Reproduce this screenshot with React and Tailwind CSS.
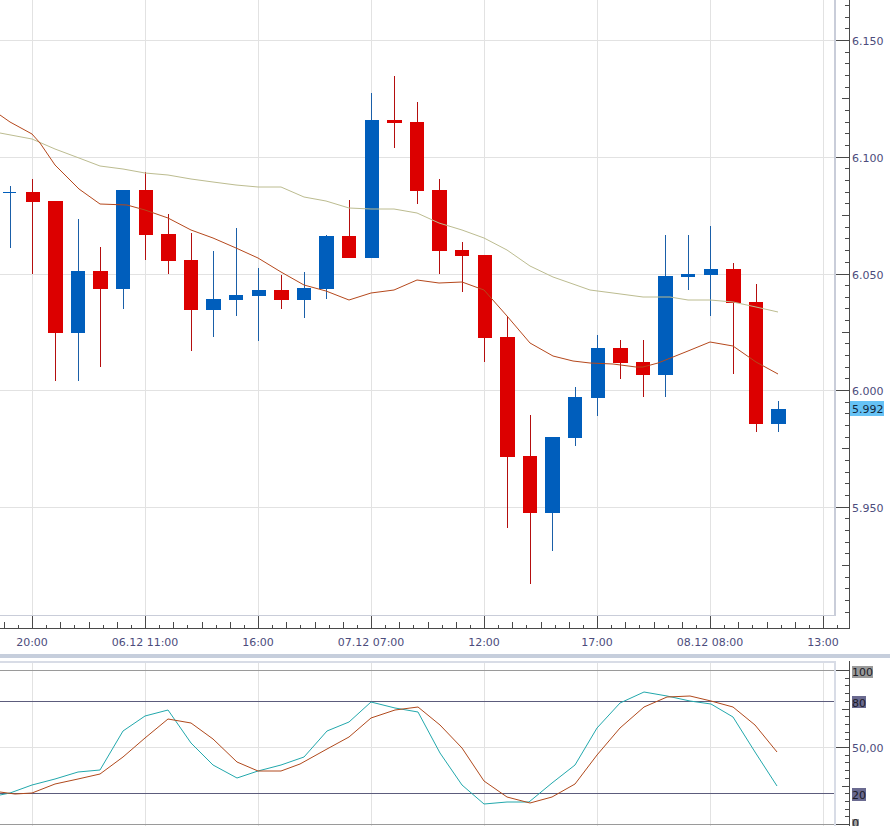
import React from "react";

const RED = "#dc0000";
const BLUE = "#005ebc";

// wick x, body left, body right, high, low, body top, body bottom, colour
const candles = [
  [10, 3, 16, 186, 248, 192, 193, BLUE],
  [32, 26, 40, 179, 274, 192, 202, RED],
  [55, 48, 63, 201, 381, 201, 333, RED],
  [78, 71, 85, 219, 381, 271, 333, BLUE],
  [100, 93, 108, 247, 367, 271, 289, RED],
  [123, 116, 130, 190, 309, 190, 289, BLUE],
  [145, 139, 153, 172, 260, 190, 235, RED],
  [168, 161, 176, 214, 274, 234, 261, RED],
  [191, 184, 198, 233, 351, 260, 310, RED],
  [213, 206, 221, 251, 337, 299, 310, BLUE],
  [236, 229, 243, 228, 316, 295, 300, BLUE],
  [258, 252, 266, 268, 341, 290, 296, BLUE],
  [281, 274, 289, 275, 309, 290, 300, RED],
  [304, 297, 311, 272, 318, 288, 300, BLUE],
  [326, 319, 334, 235, 299, 236, 289, BLUE],
  [349, 342, 356, 200, 258, 236, 258, RED],
  [371, 365, 379, 93, 258, 120, 258, BLUE],
  [394, 387, 402, 76, 148, 120, 123, RED],
  [417, 410, 424, 102, 204, 122, 191, RED],
  [439, 432, 447, 179, 274, 190, 251, RED],
  [462, 455, 469, 242, 292, 250, 256, RED],
  [484, 478, 492, 255, 362, 255, 338, RED],
  [507, 500, 515, 316, 528, 337, 457, RED],
  [530, 523, 537, 415, 584, 456, 513, RED],
  [552, 545, 560, 437, 551, 437, 513, BLUE],
  [575, 568, 582, 387, 446, 397, 438, BLUE],
  [597, 591, 605, 335, 416, 348, 398, BLUE],
  [620, 613, 628, 340, 379, 348, 363, RED],
  [643, 636, 650, 340, 397, 362, 375, RED],
  [665, 658, 673, 235, 397, 276, 375, BLUE],
  [688, 681, 695, 235, 290, 274, 277, BLUE],
  [710, 704, 718, 226, 316, 269, 275, BLUE],
  [733, 726, 741, 263, 374, 269, 303, RED],
  [756, 749, 763, 284, 432, 302, 424, RED],
  [778, 771, 786, 401, 432, 409, 424, BLUE],
];

const fastMa =
  "0,115 10,122 32,134 40,143 55,165 79,189 100,204 127,205 145,210 168,218 191,230 213,238 236,248 258,258 281,272 304,285 326,291 349,300 371,293 394,290 417,280 439,283 462,282 484,290 507,316 530,343 553,356 573,361 590,363 613,364 636,367 643,367 658,363 688,351 710,342 733,346 756,362 778,374";
const slowMa =
  "0,133 32,139 55,149 79,158 100,166 123,169 145,173 168,175 191,179 213,182 236,185 258,187 281,187 304,197 326,201 349,208 371,209 394,209 417,213 439,223 462,230 484,238 507,250 530,266 553,277 573,284 590,290 613,293 643,297 670,297 688,300 710,300 733,302 756,307 778,312";
const oscFast =
  "0,795 10,793 32,785 55,779 78,772 100,770 123,731 145,716 168,710 191,743 213,765 237,778 258,771 281,765 304,757 327,731 349,722 371,702 395,708 418,712 440,753 462,785 484,804 507,802 529,802 552,783 575,765 597,728 620,703 644,692 667,696 690,701 711,704 733,717 755,752 777,786";
const oscSlow =
  "0,792 15,794 32,793 55,784 78,779 100,774 123,757 145,738 168,719 191,723 213,739 237,762 258,771 281,771 300,764 327,749 349,737 371,718 395,710 418,707 440,725 462,748 484,781 507,797 530,803 552,797 575,784 597,755 620,728 644,707 667,697 690,696 711,701 733,707 755,725 777,752";

const timeGrid = [32, 145, 258, 371, 484, 597, 710, 823];
const priceGrid = [
  [40, "6.150"],
  [157, "6.100"],
  [274, "6.050"],
  [390, "6.000"],
  [507, "5.950"],
];
const timeLabels = [
  [32, "20:00"],
  [145, "06.12 11:00"],
  [258, "16:00"],
  [371, "07.12 07:00"],
  [484, "12:00"],
  [597, "17:00"],
  [710, "08.12 08:00"],
  [823, "13:00"],
];
// value tags on the oscillator scale: label, box top, box height, box width, baseline, fill
const oscTags = [
  ["100", 666, 12, 21, 676, "#9a9a9a"],
  ["80", 696, 12, 14, 707, "#6a6a90"],
  ["20", 788, 13, 14, 799, "#6a6a90"],
  ["0", 819, 7, 7, 827, "#a4a4a4"],
];

const GRID = "#e2e2e2";
const AXIS = "#4a4a4a";
const LABEL = "#4c4c7c";

function PricePlot() {
  return (
    <svg viewBox="0 0 834 615" className="block w-[834px] h-[615px]">
      <g shapeRendering="crispEdges">
        {timeGrid.map((x) => (
          <rect key={x} x={x} y="0" width="1" height="615" fill={GRID} />
        ))}
        {priceGrid.map(([y]) => (
          <rect key={y} x="0" y={y} width="834" height="1" fill={GRID} />
        ))}
        {candles.map(([wx, l, r, hi, lo, top, bot, color]) => (
          <g key={wx}>
            <rect x={wx} y={hi} width="1" height={lo - hi} fill={color === RED ? "#b40e0e" : "#1a5fa8"} />
            <rect x={l} y={top} width={r - l} height={bot - top} fill={color} />
          </g>
        ))}
      </g>
      <polyline points={slowMa} fill="none" stroke="#bcbc90" strokeWidth="1" />
      <polyline points={fastMa} fill="none" stroke="#b5481c" strokeWidth="1" />
    </svg>
  );
}

function PriceAxis() {
  // 11.67px between ticks, every fifth one longer, every tenth sits on a grid line
  const ticks = [];
  for (let i = -3; i < 50; i++) {
    if (i % 10 === 0) continue;
    ticks.push([Math.round(40 + i * 11.67), Math.abs(i) % 5 === 0 ? 7 : 4]);
  }
  return (
    <svg viewBox="836 0 54 616" className="block w-[54px] h-[616px]">
      <g shapeRendering="crispEdges">
        <rect x="849" y="0" width="1" height="616" fill={AXIS} />
        {ticks.map(([y, len]) => (
          <rect key={y} x={849 - len} y={y} width={len} height="1" fill={AXIS} />
        ))}
        {priceGrid.map(([y]) => (
          <rect key={y} x="836" y={y} width="13" height="1" fill={AXIS} />
        ))}
        <rect x="850" y="401" width="34" height="15" fill="#66c2f5" />
      </g>
      {priceGrid.map(([y, label]) => (
        <text key={y} x="852" y={y + 5} fill={LABEL}>
          {label}
        </text>
      ))}
      <text x="852" y="413" fill="#12283c">
        5.992
      </text>
    </svg>
  );
}

function TimeAxis() {
  const ticks = [];
  for (let i = 0; i < 60; i++) {
    const x = Math.round(32 - 14.125 * 2 + i * 14.125);
    if (x > 849) break;
    ticks.push([x, i % 2 === 0 ? 6 : 3]);
  }
  return (
    <svg viewBox="0 616 890 38" className="block w-[890px] h-[38px]">
      <g shapeRendering="crispEdges">
        <rect x="0" y="628" width="850" height="1" fill={AXIS} />
        <rect x="849" y="616" width="1" height="13" fill={AXIS} />
        {ticks.map(([x, h]) => (
          <rect key={x} x={x} y={628 - h} width="1" height={h} fill={AXIS} />
        ))}
        {timeGrid.map((x) => (
          <rect key={x} x={x} y="616" width="1" height="12" fill={AXIS} />
        ))}
      </g>
      {timeLabels.map(([x, label]) => (
        <text key={x} x={x} y="646" textAnchor="middle" fill={LABEL}>
          {label}
        </text>
      ))}
    </svg>
  );
}

function OscPlot() {
  return (
    <svg viewBox="0 663 834 163" className="block w-[834px] h-[163px]">
      <g shapeRendering="crispEdges">
        {timeGrid.map((x) => (
          <rect key={x} x={x} y="663" width="1" height="163" fill={GRID} />
        ))}
        <rect x="0" y="747" width="834" height="1" fill={GRID} />
        <rect x="0" y="670" width="834" height="1" fill="#9a9a9a" />
        <rect x="0" y="701" width="834" height="1" fill="#5c5c7c" />
        <rect x="0" y="793" width="834" height="1" fill="#5c5c7c" />
        <rect x="0" y="824" width="834" height="1" fill="#9a9a9a" />
      </g>
      <polyline points={oscFast} fill="none" stroke="#22a8ac" strokeWidth="1" />
      <polyline points={oscSlow} fill="none" stroke="#b0491c" strokeWidth="1" />
    </svg>
  );
}

function OscAxis() {
  const ticks = [];
  for (let i = 0; i <= 20; i++) {
    const len = i % 10 === 0 ? 13 : i % 5 === 0 ? 7 : 4;
    ticks.push([Math.round(670 + i * 7.7), len]);
  }
  return (
    <svg viewBox="836 661 54 165" className="block w-[54px] h-[165px]">
      <g shapeRendering="crispEdges">
        <rect x="849" y="661" width="1" height="165" fill={AXIS} />
        {ticks.map(([y, len]) => (
          <rect key={y} x={849 - len} y={y} width={len} height="1" fill={AXIS} />
        ))}
      </g>
      {oscTags.map(([label, top, h, w, base, fill]) => (
        <g key={label}>
          <rect x="852" y={top} width={w} height={h} fill={fill} shapeRendering="crispEdges" />
          <text x="852" y={base} fill="#1c1c28">
            {label}
          </text>
        </g>
      ))}
      <text x="852" y="752" fill={LABEL}>
        50,00
      </text>
    </svg>
  );
}

export default function App() {
  return (
    <div className="w-[890px] h-[826px] overflow-hidden bg-white font-['DejaVu_Sans',sans-serif] text-[11px]">
      <div className="flex h-[616px]">
        <div className="w-[836px] h-[616px] border-r-2 border-b border-[#c9cdd9]">
          <PricePlot />
        </div>
        <PriceAxis />
      </div>
      <TimeAxis />
      {/* splitter between the two panes */}
      <div className="h-1 bg-[#c6cedc]" />
      <div className="h-[3px]" />
      <div className="flex h-[165px]">
        <div className="w-[836px] h-[165px] border-r-2 border-t-2 border-[#d8dce6]">
          <OscPlot />
        </div>
        <OscAxis />
      </div>
    </div>
  );
}
